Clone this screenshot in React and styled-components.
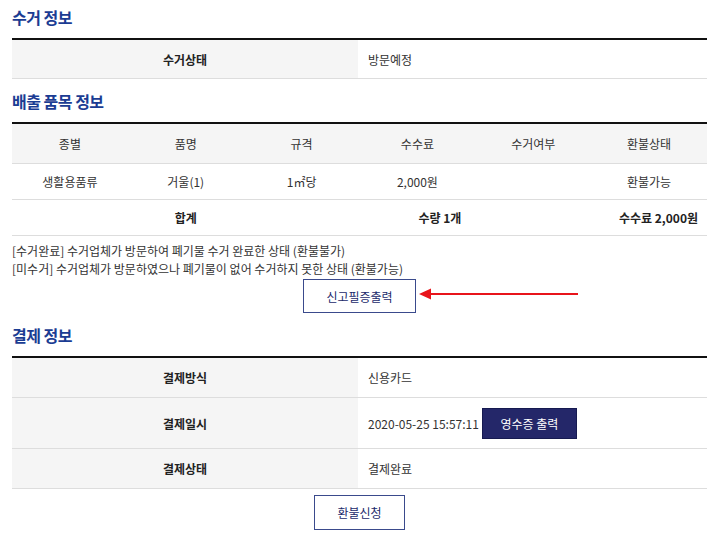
import React from "react";
import styled, { createGlobalStyle } from "styled-components";

const Global = createGlobalStyle`
  html, body { margin: 0; padding: 0; background: #fff; }
  body {
    font-family: "Noto Sans CJK KR", "Noto Sans", sans-serif;
    color: #333;
    font-size: 12px;
  }
  * { box-sizing: border-box; }
`;

const Page = styled.div`
  width: 720px;
  padding: 0 13px 0 12px;
`;

const Heading = styled.h2`
  margin: 0;
  padding: ${p => p.$pt || 10}px 0 9px;
  line-height: 24px;
  font-size: 16px;
  font-weight: 700;
  color: #1b3c93;
  letter-spacing: -0.5px;
`;

const InfoTable = styled.div`
  border-top: 2px solid #111;
  display: grid;
  grid-template-columns: 346px 1fr;
`;

const Label = styled.div`
  background: #f5f5f5;
  height: ${p => p.$h || 39}px;
  border-bottom: 1px solid #ddd;
  display: flex;
  align-items: center;
  justify-content: center;
  font-weight: 700;
  color: #222;
`;

const Value = styled.div`
  height: ${p => p.$h || 39}px;
  border-bottom: 1px solid #ddd;
  display: flex;
  align-items: center;
  padding-left: 10px;
  color: #333;
`;

const ItemTable = styled.div`
  border-top: 2px solid #111;
  display: grid;
  grid-template-columns: repeat(6, 1fr);
`;

const Cell = styled.div`
  height: ${p => p.$h}px;
  border-bottom: 1px solid #ddd;
  background: ${p => (p.$head ? "#f5f5f5" : "#fff")};
  display: flex;
  align-items: center;
  justify-content: ${p => p.$align || "center"};
  padding-right: ${p => p.$pr || 0}px;
  font-weight: ${p => (p.$bold ? 700 : 400)};
  color: ${p => (p.$bold ? "#222" : "#333")};
  grid-column: span ${p => p.$span || 1};
`;

const Notes = styled.div`
  padding-top: 6px;
  line-height: 18px;
  font-size: 12px;
  color: #333;
`;

const ButtonRow = styled.div`
  position: relative;
  display: flex;
  justify-content: center;
  padding-top: ${p => p.$pt || 0}px;
`;

const OutlineButton = styled.button`
  width: ${p => p.$w}px;
  height: ${p => p.$h}px;
  background: #fff;
  border: 1px solid #3a4a8c;
  color: #1b2a6b;
  font-family: inherit;
  font-size: 12px;
  padding: 0;
  cursor: pointer;
`;

const NavyButton = styled.button`
  width: 95px;
  height: 31px;
  margin-left: 3px;
  background: #242769;
  border: 1px solid #161a50;
  color: #fff;
  font-family: inherit;
  font-size: 12px;
  padding: 0;
`;

const Arrow = styled.svg`
  position: absolute;
  left: calc(50% + 59px);
  top: 10px;
`;

export default function App() {
  const heads = ["종별", "품명", "규격", "수수료", "수거여부", "환불상태"];
  const row = ["생활용품류", "거울(1)", "1㎡당", "2,000원", "", "환불가능"];
  return (
    <Page>
      <Global />
      <Heading $pt={5}>수거 정보</Heading>
      <InfoTable>
        <Label>수거상태</Label>
        <Value>방문예정</Value>
      </InfoTable>

      <Heading>배출 품목 정보</Heading>
      <ItemTable>
        {heads.map(h => (
          <Cell key={h} $h={40} $head>{h}</Cell>
        ))}
        {row.map((c, i) => (
          <Cell key={i} $h={36}>{c}</Cell>
        ))}
        <Cell $h={36} />
        <Cell $h={36} $bold>합계</Cell>
        <Cell $h={36} />
        <Cell $h={36} $bold $align="flex-end" $pr={14}>수량 1개</Cell>
        <Cell $h={36} $bold $span={2} $align="flex-end" $pr={9}>수수료 2,000원</Cell>
      </ItemTable>
      <Notes>
        <div>[수거완료] 수거업체가 방문하여 폐기물 수거 완료한 상태 (환불불가)</div>
        <div>[미수거] 수거업체가 방문하였으나 폐기물이 없어 수거하지 못한 상태 (환불가능)</div>
      </Notes>
      <ButtonRow $pt={1}>
        <OutlineButton $w={113} $h={34}>신고필증출력</OutlineButton>
        <Arrow width="160" height="12" viewBox="0 0 160 12">
          <line x1="9" y1="6" x2="159" y2="6" stroke="#e8141b" strokeWidth="2" />
          <polygon points="0,6 12,0.5 12,11.5" fill="#e8141b" />
        </Arrow>
      </ButtonRow>

      <Heading $pt={10}>결제 정보</Heading>
      <InfoTable>
        <Label $h={40}>결제방식</Label>
        <Value $h={40}>신용카드</Value>
        <Label $h={51}>결제일시</Label>
        <Value $h={51}>
          2020-05-25 15:57:11
          <NavyButton>영수증 출력</NavyButton>
        </Value>
        <Label $h={40}>결제상태</Label>
        <Value $h={40}>결제완료</Value>
      </InfoTable>
      <ButtonRow $pt={6}>
        <OutlineButton $w={91} $h={35}>환불신청</OutlineButton>
      </ButtonRow>
    </Page>
  );
}
